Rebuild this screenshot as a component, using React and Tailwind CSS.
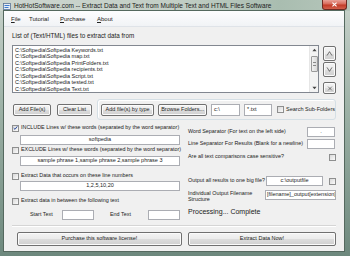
import React from "react";

const files = [
  "C:\\Softpedia\\Softpedia Keywords.txt",
  "C:\\Softpedia\\Softpedia map.txt",
  "C:\\Softpedia\\Softpedia PrintFolders.txt",
  "C:\\Softpedia\\Softpedia recipients.txt",
  "C:\\Softpedia\\Softpedia Script.txt",
  "C:\\Softpedia\\Softpedia tested.txt",
  "C:\\Softpedia\\Softpedia Text.txt",
];

// Vista style push button
const Btn = ({ className = "", children }) => (
  <div
    className={`flex items-center justify-center rounded-[2px] border border-[#707070] bg-[linear-gradient(#f4f4f4_0%,#ebebeb_50%,#dddddd_51%,#cfcfcf_100%)] text-[5.5px] leading-none text-[#222] shadow-[inset_0_0_0_1px_#fbfbfb] whitespace-nowrap ${className}`}
  >
    {children}
  </div>
);

const Field = ({ className = "", children }) => (
  <div
    className={`flex items-center bg-white border border-[#abadb3] text-[5.5px] leading-none text-[#222] whitespace-nowrap overflow-hidden ${className}`}
  >
    {children}
  </div>
);

const Check = ({ checked, className = "" }) => (
  <div
    className={`w-[7px] h-[7px] shrink-0 border border-[#8e8f8f] bg-[linear-gradient(135deg,#d9d9d9,#fbfbfb)] flex items-center justify-center ${className}`}
  >
    {checked && (
      <svg viewBox="0 0 7 7" className="w-[6px] h-[6px]">
        <path d="M1 3.6 L2.8 5.4 L6 1.2" stroke="#1c3f95" strokeWidth="1.3" fill="none" />
      </svg>
    )}
  </div>
);

const Row = ({ checked, children, className = "" }) => (
  <div className={`flex items-center h-[8px] ${className}`}>
    <Check checked={checked} />
    <span className="ml-[2px] text-[5.4px] leading-none whitespace-nowrap">{children}</span>
  </div>
);

export default function App() {
  return (
    <div className="w-[350px] h-[256px] overflow-hidden flex flex-col font-['Liberation_Sans',Arial,sans-serif] text-[#222] bg-[linear-gradient(180deg,#c8d2cb_0%,#9fb3a8_40%,#6d887d_100%)]">
      {/* Title bar */}
      <div className="h-[11px] shrink-0 flex items-start bg-[linear-gradient(90deg,#cdd6cf_0%,#c2cec5_50%,#a9bdb0_80%,#b6c6bb_100%)]">
        <svg viewBox="0 0 8 8" className="w-[8px] h-[8px] ml-[3px] mt-[2px]">
          <rect x="0.5" y="1.5" width="7" height="6" fill="#e8eef6" stroke="#5a7394" strokeWidth="0.8" />
          <rect x="1.5" y="3" width="5" height="1" fill="#3d7bd0" />
          <rect x="1.5" y="5" width="4" height="1" fill="#3d7bd0" />
        </svg>
        <span className="ml-[3px] text-[6.5px] leading-[11px] text-[#1b1b1b] whitespace-nowrap">
          HotHotSoftware.com -- Extract Data and Text from Multiple Text and HTML Files Software
        </span>
        <div className="ml-auto mr-[3px] w-[25px] h-[10px] rounded-b-[3px] border border-t-0 border-[#6e2a22] bg-[linear-gradient(#e9a197_0%,#d86a5a_45%,#c23b27_55%,#d2604c_100%)] flex items-center justify-center">
          <svg viewBox="0 0 8 6" className="w-[7px] h-[5px]">
            <path d="M1.5 0.8 L6.5 5.2 M6.5 0.8 L1.5 5.2" stroke="#fff" strokeWidth="1.4" />
          </svg>
        </div>
      </div>

      {/* Window client */}
      <div className="ml-[4px] w-[340px] h-[240px] flex flex-col bg-[#f0f0f0] shadow-[0_0_0_1px_#55695f]">
        {/* Menu */}
        <div className="h-[16px] shrink-0 flex items-center pl-[7px] text-[6px] leading-none bg-[linear-gradient(#fdfdfe,#f1f3f6)] border-b border-[#dfe3e8]">
          <span className="w-[18px]"><u>F</u>ile</span>
          <span className="w-[31px]">Tutorial</span>
          <span className="w-[37px]"><u>P</u>urchase</span>
          <span><u>A</u>bout</span>
        </div>

        <div className="flex flex-col px-[8px]">
          <div className="mt-[5px] h-[8px] leading-[8px] text-[6.3px] whitespace-nowrap">
            List of (Text/HTML) files to extract data from
          </div>

          {/* File list */}
          <div className="mt-[5px] flex">
            <div className="w-[312px] h-[48px] border border-[#828790] bg-white flex">
              <div className="flex-1 pl-[2px] pt-[1px] text-[5.5px] leading-[6.45px] whitespace-nowrap">
                {files.map((f) => (
                  <div key={f}>{f}</div>
                ))}
              </div>
              <div className="w-[9px] flex flex-col items-center bg-[#f3f3f3] border-l border-[#e6e6e6]">
                <svg viewBox="0 0 6 4" className="w-[5px] h-[4px] mt-[2px]">
                  <path d="M0.5 3.5 L3 0.5 L5.5 3.5 Z" fill="#444" />
                </svg>
                <div className="mt-[4px] w-[7px] h-[16px] rounded-[1px] border border-[#9a9a9a] bg-[linear-gradient(90deg,#f1f1f1,#d9d9d9)] flex items-center justify-center">
                  <div className="w-[3px] h-[4px] border-y border-[#888]" />
                </div>
                <div className="flex-1" />
                <svg viewBox="0 0 6 4" className="w-[5px] h-[4px] mb-[2px]">
                  <path d="M0.5 0.5 L3 3.5 L5.5 0.5 Z" fill="#444" />
                </svg>
              </div>
            </div>
            <div className="ml-[4px] w-[13px] pt-[1px] flex flex-col">
              <Btn className="h-[15px]">
                <svg viewBox="0 0 8 6" className="w-[7px] h-[5px]">
                  <path d="M1 5.5 L4 0.8 L7 5.5" stroke="#333" strokeWidth="0.8" fill="none" />
                </svg>
              </Btn>
              <Btn className="h-[15px] mt-[1px]">
                <svg viewBox="0 0 8 6" className="w-[7px] h-[5px]">
                  <path d="M1 0.5 L4 5.2 L7 0.5" stroke="#333" strokeWidth="0.8" fill="none" />
                </svg>
              </Btn>
              <Btn className="h-[12px] mt-[5px]">
                <svg viewBox="0 0 8 6" className="w-[6px] h-[5px]">
                  <path d="M1.5 0.5 L6.5 5.5 M6.5 0.5 L1.5 5.5" stroke="#333" strokeWidth="0.8" />
                </svg>
              </Btn>
            </div>
          </div>

          {/* Add files row */}
          <div className="mt-[5px] h-[21px] flex items-center">
            <Btn className="ml-[1px] w-[39px] h-[12px]">Add File(s)</Btn>
            <Btn className="ml-[6px] w-[36px] h-[12px]">Clear List</Btn>
            <div className="ml-[5px] w-[241px] h-[21px] border border-[#d5dfe5] rounded-[3px] flex items-center pl-[3px] shadow-[inset_1px_1px_0_#fff]">
              <Btn className="w-[53px] h-[12px]">Add file(s) by type</Btn>
              <Btn className="ml-[4px] w-[49px] h-[12px]">Browse Folders...</Btn>
              <Field className="ml-[4px] w-[29px] h-[12px] pl-[2px] items-start pt-[2px]">c:\</Field>
              <Field className="ml-[4px] w-[28px] h-[12px] pl-[2px] items-start pt-[2px]">*.txt</Field>
              <Check className="ml-[5px]" />
              <span className="ml-[2px] text-[5.5px] leading-none whitespace-nowrap">Search Sub-Folders</span>
            </div>
          </div>

          {/* Options */}
          <div className="h-[105px] flex">
            <div className="w-[168px] shrink-0 flex flex-col">
              <Row checked className="mt-[4px]">
                INCLUDE Lines w/ these words (separated by the word separator)
              </Row>
              <Field className="ml-[8px] w-[160px] h-[10px] mt-[3px] justify-center">softpedia</Field>
              <Row className="mt-[1px]">EXCLUDE Lines w/ these words (separated by the word separator)</Row>
              <Field className="ml-[8px] w-[160px] h-[10px] mt-[2px] justify-center">
                sample phrase 1,sample phrase 2,sample phrase 3
              </Field>
              <Row className="mt-[6px]">Extract Data that occurs on these line numbers</Row>
              <Field className="ml-[8px] w-[160px] h-[10px] mt-[1px] justify-center">1,2,5,10,20</Field>
              <Row className="mt-[6px]">Extract data in between the following text</Row>
              <div className="mt-[5px] h-[10px] flex items-center text-[5.4px] leading-none whitespace-nowrap">
                <span className="ml-[18px] w-[32px]">Start Text</span>
                <Field className="w-[32px] h-[10px]" />
                <span className="ml-[16px] w-[38px]">End Text</span>
                <Field className="w-[32px] h-[10px]" />
              </div>
            </div>

            <div className="ml-[8px] w-[153px] flex flex-col text-[5.4px] leading-none whitespace-nowrap">
              <div className="mt-[7px] h-[10px] flex items-center">
                <span>Word Separator (For text on the left side)</span>
                <Field className="ml-auto mr-[1px] w-[28px] h-[10px] justify-center">.</Field>
              </div>
              <div className="mt-[2px] h-[10px] flex items-center">
                <span>Line Separator For Results (Blank for a newline)</span>
                <Field className="ml-auto mr-[1px] w-[28px] h-[10px]" />
              </div>
              <div className="mt-[4px] h-[8px] flex items-center">
                <span>Are all text comparisons case sensitive?</span>
                <Check className="ml-auto" />
              </div>
              <div className="mt-[15px] h-[10px] flex items-center">
                <span>Output all results to one big file?</span>
                <Field className="ml-auto w-[57px] h-[10px] justify-center">c:\outputfile</Field>
                <Check className="ml-[6px]" />
              </div>
              <div className="mt-[4px] h-[12px] flex items-start">
                <span className="leading-[6px]">
                  Individual Output Filename
                  <br />
                  Structure
                </span>
                <Field className="ml-auto w-[71px] h-[10px] pl-[1px]">[filename]_output[extension]</Field>
              </div>
              <div className="mt-[6px] text-[7px] leading-[8px]">Processing... Complete</div>
            </div>
          </div>

          {/* Separator */}
          <div className="h-[2px] border-t border-[#d5d5d5] border-b border-b-white" />

          {/* Bottom buttons */}
          <div className="mt-[5px] flex">
            <Btn className="ml-[5px] w-[167px] h-[14px]">Purchase this software license!</Btn>
            <Btn className="ml-[6px] w-[150px] h-[14px]">Extract Data Now!</Btn>
          </div>
        </div>
      </div>
    </div>
  );
}
